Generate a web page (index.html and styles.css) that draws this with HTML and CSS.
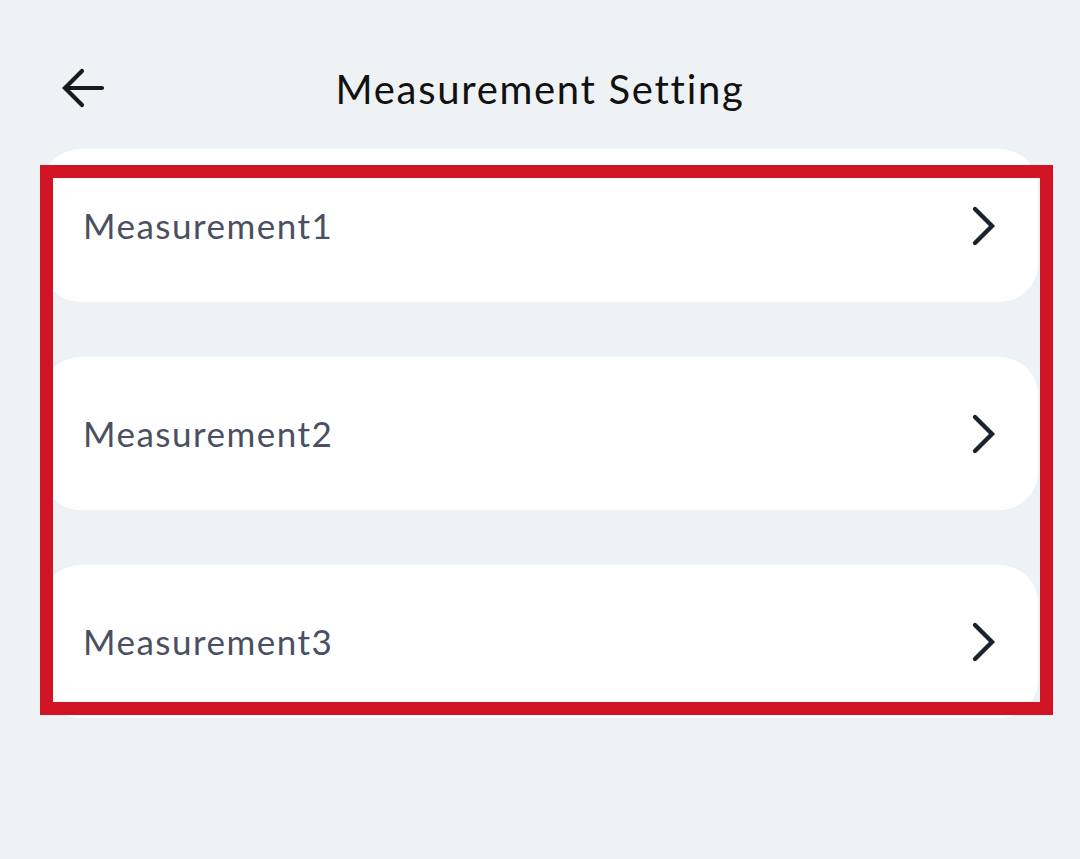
FILE: index.html
```html
<!DOCTYPE html>
<html>
<head>
<meta charset="utf-8">
<link rel="stylesheet" href="styles.css">
</head>
<body>
<div class="page">
  <header class="header">
    <span class="back">
      <svg width="48" height="48" viewBox="0 0 48 48"><path d="M44 24H8M24 7L7 24l17 17" fill="none" stroke="#1a1a1a" stroke-width="4.2" stroke-linecap="round" stroke-linejoin="miter"/></svg>
    </span>
    <h1 class="title">Measurement Setting</h1>
  </header>
  <div class="list">
    <div class="card"><span class="label">Measurement1</span><svg class="chev" width="28" height="44" viewBox="0 0 28 44"><path d="M5 5l17 17L5 39" fill="none" stroke="#1c2030" stroke-width="4.4" stroke-linecap="round" stroke-linejoin="miter"/></svg></div>
    <div class="card"><span class="label">Measurement2</span><svg class="chev" width="28" height="44" viewBox="0 0 28 44"><path d="M5 5l17 17L5 39" fill="none" stroke="#1c2030" stroke-width="4.4" stroke-linecap="round" stroke-linejoin="miter"/></svg></div>
    <div class="card"><span class="label">Measurement3</span><svg class="chev" width="28" height="44" viewBox="0 0 28 44"><path d="M5 5l17 17L5 39" fill="none" stroke="#1c2030" stroke-width="4.4" stroke-linecap="round" stroke-linejoin="miter"/></svg></div>
  </div>
  <div class="highlight"></div>
</div>
</body>
</html>
```
FILE: styles.css
```css
html, body {
  margin: 0;
  padding: 0;
  background: #eff2f5;
}
.page {
  position: relative;
  width: 1080px;
  height: 859px;
  font-family: "Lato", "Liberation Sans", sans-serif;
}
.header {
  position: relative;
  height: 118px;
  padding-top: 30px;
  display: flex;
  align-items: center;
  justify-content: center;
}
.back {
  position: absolute;
  left: 58px;
  top: 64px;
  display: flex;
}
.title {
  margin: 0;
  font-size: 40px;
  font-weight: 400;
  letter-spacing: 1.7px;
  color: #111111;
}
.list {
  display: flex;
  flex-direction: column;
  gap: 55px;
  padding: 1px 42px 0;
}
.card {
  height: 153px;
  background: #ffffff;
  border-radius: 38px;
  display: flex;
  align-items: center;
  justify-content: space-between;
  padding: 0 40px 0 41px;
}
.label {
  font-size: 35px;
  letter-spacing: 1.5px;
  color: #4a5062;
  margin-top: -2px;
}
.chev {
  display: block;
}
.highlight {
  position: absolute;
  left: 40px;
  top: 165px;
  width: 987px;
  height: 524px;
  border: 13px solid #d01424;
}
```
